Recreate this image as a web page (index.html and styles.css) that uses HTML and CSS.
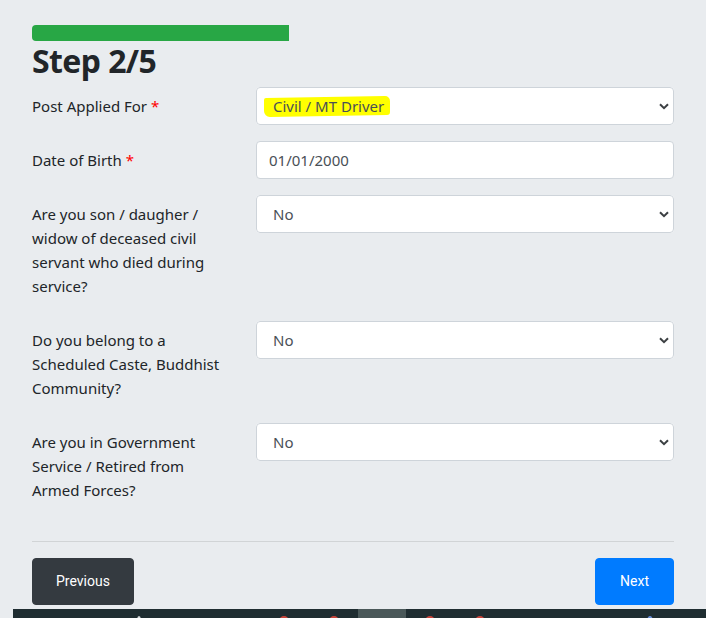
FILE: index.html
```html
<!DOCTYPE html>
<html lang="en">
<head>
  <meta charset="UTF-8">
  <title>Application - Step 2</title>
  <meta name="viewport" content="width=device-width, initial-scale=1.0">
  <link rel="stylesheet" href="styles.css">
</head>
<body>
  <div class="wizard">
    <div class="progress">
      <div class="progress-bar" style="width: 40%"></div>
    </div>
    <h2 class="step-title">Step 2/5</h2>

    <form class="step-form">
      <div class="form-row">
        <label class="form-label" for="post">Post Applied For <span class="req">*</span></label>
        <div class="form-field">
          <div class="select-wrap">
            <span class="marker"></span>
            <select id="post" class="form-control marked">
              <option>Civil / MT Driver</option>
            </select>
            <svg class="caret" width="10" height="7" viewBox="0 0 10 7"><path d="M1 1.2 L5 5.2 L9 1.2" /></svg>
          </div>
        </div>
      </div>

      <div class="form-row">
        <label class="form-label" for="dob">Date of Birth <span class="req">*</span></label>
        <div class="form-field">
          <input id="dob" class="form-control" type="text" value="01/01/2000">
        </div>
      </div>

      <div class="form-row">
        <label class="form-label" for="deceased">Are you son / daugher / widow of deceased civil servant who died during service?</label>
        <div class="form-field">
          <div class="select-wrap">
            <select id="deceased" class="form-control">
              <option>No</option>
              <option>Yes</option>
            </select>
            <svg class="caret" width="10" height="7" viewBox="0 0 10 7"><path d="M1 1.2 L5 5.2 L9 1.2" /></svg>
          </div>
        </div>
      </div>

      <div class="form-row">
        <label class="form-label" for="caste">Do you belong to a Scheduled Caste, Buddhist Community?</label>
        <div class="form-field">
          <div class="select-wrap">
            <select id="caste" class="form-control">
              <option>No</option>
              <option>Yes</option>
            </select>
            <svg class="caret" width="10" height="7" viewBox="0 0 10 7"><path d="M1 1.2 L5 5.2 L9 1.2" /></svg>
          </div>
        </div>
      </div>

      <div class="form-row">
        <label class="form-label" for="service">Are you in Government Service / Retired from Armed Forces?</label>
        <div class="form-field">
          <div class="select-wrap">
            <select id="service" class="form-control">
              <option>No</option>
              <option>Yes</option>
            </select>
            <svg class="caret" width="10" height="7" viewBox="0 0 10 7"><path d="M1 1.2 L5 5.2 L9 1.2" /></svg>
          </div>
        </div>
      </div>

      <hr class="divider">

      <div class="actions">
        <button type="button" class="btn btn-dark">Previous</button>
        <button type="button" class="btn btn-primary">Next</button>
      </div>
    </form>
  </div>

  <div class="taskbar">
    <span class="tb-dot light" style="left: 124px"></span>
    <span class="tb-dot" style="left: 266px"></span>
    <span class="tb-dot" style="left: 316px"></span>
    <span class="tb-active"></span>
    <span class="tb-dot" style="left: 412px"></span>
    <span class="tb-dot" style="left: 462px"></span>
    <span class="tb-dot blue" style="left: 634px"></span>
  </div>
</body>
</html>
```

FILE: styles.css
```css
* {
  box-sizing: border-box;
}
body {
  margin: 0;
  background: #e9ecef;
  color: #212529;
  font-family: "Noto Sans", "Open Sans", sans-serif;
  font-size: 15px;
  line-height: 24px;
}
.wizard {
  width: 642px;
  margin-left: 32px;
  padding-top: 25px;
}
.progress {
  height: 16px;
  background: #e9ecef;
  border-radius: 4px;
  overflow: hidden;
}
.progress-bar {
  height: 100%;
  background: #28a745;
}
.step-title {
  margin: 0 0 6px;
  font-size: 32px;
  line-height: 40px;
  font-weight: 700;
  letter-spacing: -0.6px;
}
.form-row {
  display: flex;
  margin-bottom: 16px;
}
.form-label {
  width: 224px;
  padding: 7px 30px 7px 0;
}
.req {
  color: #f00;
}
.form-field {
  flex: 1;
}
.form-control {
  display: block;
  width: 100%;
  height: 38px;
  padding: 6px 12px;
  font-family: inherit;
  font-size: 15px;
  line-height: 24px;
  color: #495057;
  background: #fff;
  border: 1px solid #ced4da;
  border-radius: 4px;
  outline: none;
}
select.form-control {
  appearance: none;
  -webkit-appearance: none;
  padding-left: 16px;
}
.select-wrap {
  position: relative;
  background: #fff;
  border-radius: 4px;
}
.select-wrap .marked {
  position: relative;
  background: transparent;
  z-index: 1;
}
/* highlighter stroke behind the chosen post */
.marker {
  position: absolute;
  left: 8px;
  top: 10px;
  width: 126px;
  height: 19px;
  background: #ffff00;
  border-radius: 2px 5px 3px 6px;
  transform: skewY(-1deg);
}
.caret {
  position: absolute;
  right: 5px;
  top: 16px;
  z-index: 2;
  pointer-events: none;
}
.caret path {
  fill: none;
  stroke: #3c4043;
  stroke-width: 2;
}
.divider {
  margin: 32px 0 16px;
  border: 0;
  border-top: 1px solid rgba(0, 0, 0, .1);
}
.actions {
  display: flex;
  justify-content: space-between;
}
.btn {
  height: 47px;
  padding: 12px 23px;
  font-family: Roboto, sans-serif;
  font-size: 14px;
  line-height: 21px;
  color: #fff;
  border: 1px solid transparent;
  border-radius: 4px;
  cursor: pointer;
}
.btn-dark {
  background: #343a40;
  border-color: #343a40;
}
.btn-primary {
  padding: 12px 24px;
  background: #007bff;
  border-color: #007bff;
}
.taskbar {
  position: relative;
  height: 10px;
  margin: 4px 0 0 13px;
  background: #1f2d31;
  overflow: hidden;
}
.tb-active {
  position: absolute;
  left: 345px;
  top: 0;
  width: 48px;
  height: 10px;
  background: #4a5859;
}
.tb-dot {
  position: absolute;
  top: 7px;
  width: 10px;
  height: 10px;
  border-radius: 50%;
  background: #c8453b;
}
.tb-dot.light {
  width: 4px;
  background: #d8dde0;
}
.tb-dot.blue {
  width: 6px;
  background: #6a8fd8;
}
```
